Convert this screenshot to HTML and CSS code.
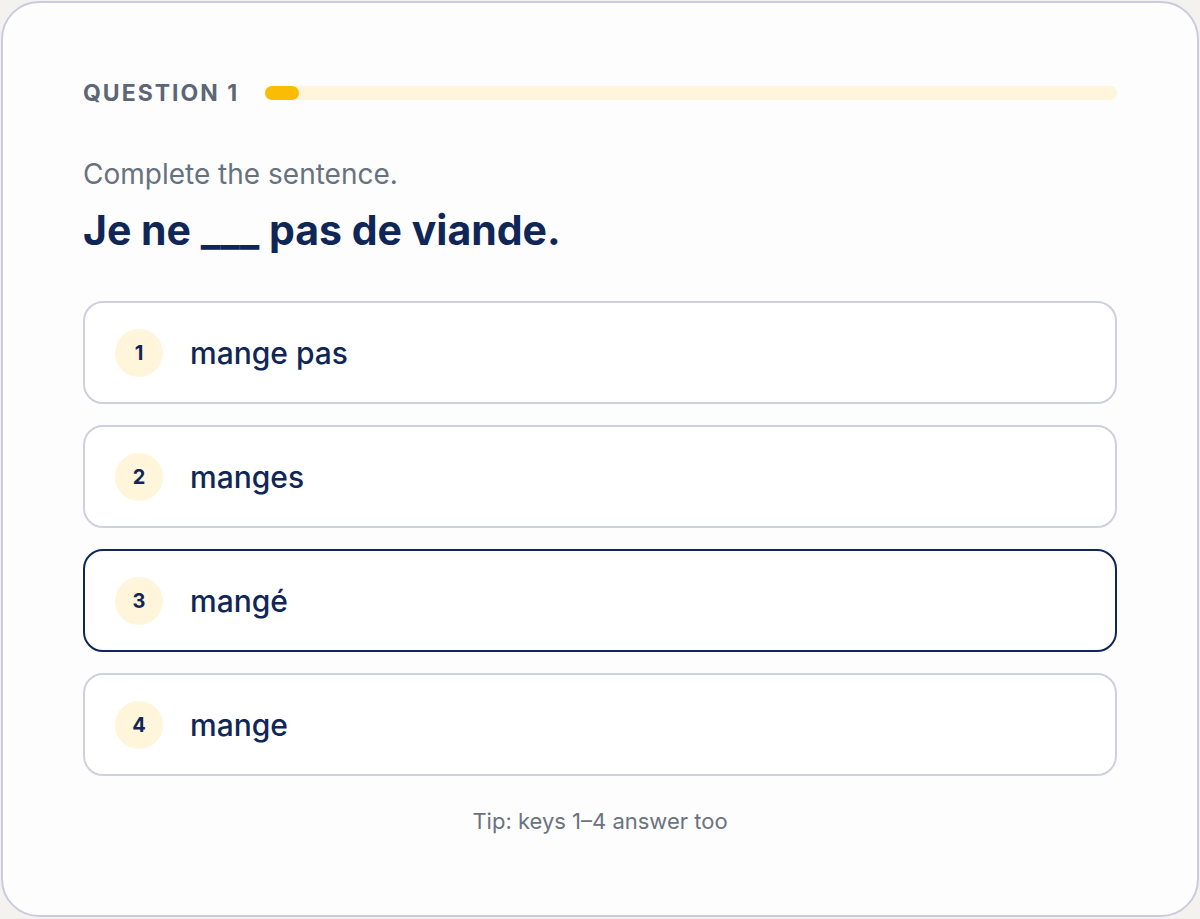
FILE: index.html
```html
<!DOCTYPE html>
<html lang="fr">
<head>
    <meta charset="UTF-8">
    <meta name="viewport" content="width=device-width, initial-scale=1.0">
    <title>Quiz</title>
    <link rel="stylesheet" href="styles.css">
</head>
<body>
    <div class="quiz-card">
        <div class="quiz-header">
            <span class="question-label">QUESTION 1</span>
            <div class="progress-track">
                <div class="progress-fill" style="width: 4%"></div>
            </div>
        </div>

        <p class="prompt">Complete the sentence.</p>
        <h1 class="sentence">Je ne ___ pas de viande.</h1>

        <div class="options">
            <button class="option"><span class="option-key">1</span><span class="option-text">mange pas</span></button>
            <button class="option"><span class="option-key">2</span><span class="option-text">manges</span></button>
            <button class="option selected"><span class="option-key">3</span><span class="option-text">mangé</span></button>
            <button class="option"><span class="option-key">4</span><span class="option-text">mange</span></button>
        </div>

        <p class="tip">Tip: keys 1–4 answer too</p>
    </div>
</body>
</html>
```

FILE: styles.css
```css
body {
    margin: 0;
    padding: 1px;
    font-family: Inter, "Noto Sans", sans-serif;
    background: #f4f2ee;
    color: #0f2657;
}

.quiz-card {
    box-sizing: border-box;
    height: 916px;
    background: #fdfdfd;
    border: 2px solid #cbcbdd;
    border-radius: 38px;
    padding: 76px 80px 0;
}

.quiz-header {
    display: flex;
    align-items: center;
    gap: 26px;
    height: 28px;
}

.question-label {
    font-size: 23px;
    font-weight: 700;
    letter-spacing: 2px;
    color: #5c6675;
}

.progress-track {
    flex: 1;
    height: 14px;
    background: #fff5da;
    border-radius: 7px;
}

.progress-fill {
    height: 100%;
    background: #fbbc05;
    border-radius: 7px;
}

.prompt {
    margin: 50px 0 0;
    font-size: 28px;
    color: #687180;
    line-height: 34px;
}

.sentence {
    margin: 15px 0 0;
    font-size: 41px;
    font-weight: 700;
    line-height: 48px;
}

.options {
    display: flex;
    flex-direction: column;
    gap: 21px;
    margin-top: 47px;
}

.option {
    display: flex;
    align-items: center;
    gap: 27px;
    height: 103px;
    padding: 0 30px;
    background: #ffffff;
    border: 2px solid #cfd0de;
    border-radius: 20px;
    font-family: inherit;
    color: #0f2657;
    cursor: pointer;
    text-align: left;
}

.option.selected {
    border-color: #0f2657;
}

.option-key {
    width: 48px;
    height: 48px;
    border-radius: 50%;
    background: #fff5da;
    display: flex;
    justify-content: center;
    align-items: center;
    font-size: 20px;
    font-weight: 700;
}

.option-text {
    font-size: 30px;
    font-weight: 500;
}

.tip {
    margin: 31px 0 0;
    text-align: center;
    font-size: 22px;
    line-height: 28px;
    color: #6b7280;
}
```
